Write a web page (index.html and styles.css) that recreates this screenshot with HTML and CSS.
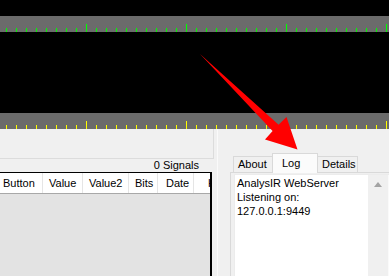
FILE: index.html
```html
<!DOCTYPE html>
<html>
<head>
<meta charset="utf-8">
<link rel="stylesheet" href="styles.css">
</head>
<body>
<div class="screen">
  <div class="black-top"></div>
  <div class="ruler ruler-green"></div>
  <div class="scope"></div>
  <div class="ruler ruler-yellow"></div>
  <div class="bottom">
    <div class="left">
      <div class="top-box"></div>
      <div class="count">0 Signals</div>
      <div class="list">
        <div class="list-head">
          <div class="col c1">Button</div>
          <div class="col c2">Value</div>
          <div class="col c3">Value2</div>
          <div class="col c4">Bits</div>
          <div class="col c5">Date</div>
          <div class="col c6">Hex</div>
        </div>
        <div class="list-body"></div>
      </div>
    </div>
    <div class="splitter"></div>
    <div class="right">
      <div class="tabs">
        <div class="tab">About</div>
        <div class="tab active">Log</div>
        <div class="tab">Details</div>
      </div>
      <div class="panel">
        <div class="textbox">
          <div class="log-text">AnalysIR WebServer<br>Listening on:<br>127.0.0.1:9449</div>
          <div class="vscroll"><span class="arrow-up"></span></div>
        </div>
      </div>
    </div>
  </div>
  <svg class="pointer" width="389" height="276" viewBox="0 0 389 276">
    <polygon points="200,54 278.6,124.8 286.5,117 297.5,149.5 265,139.5 272.6,131" fill="#ff0000"/>
  </svg>
</div>
</body>
</html>
```

FILE: styles.css
```css
html, body {
  margin: 0;
  padding: 0;
}
body {
  width: 389px;
  height: 276px;
  overflow: hidden;
  font-family: "Liberation Sans", Arial, sans-serif;
  font-size: 11px;
  color: #000;
}
.screen {
  position: relative;
  width: 389px;
  height: 276px;
  overflow: hidden;
  display: flex;
  flex-direction: column;
}
.black-top {
  height: 16px;
  background: #000;
}
.scope {
  height: 81px;
  background: #000;
}
.ruler {
  height: 16px;
  background-color: #6b6b6b;
  background-repeat: repeat-x;
  background-position: 0 100%, 0 100%;
}
.ruler-green {
  background-image:
    linear-gradient(to right, transparent 86px, #00ff00 86px, #00ff00 87px, transparent 87px),
    linear-gradient(to right, transparent 6px, #00ff00 6px, #00ff00 7px, transparent 7px);
  background-size: 100px 8px, 10px 4px;
}
.ruler-yellow {
  background-image:
    linear-gradient(to right, transparent 86px, #ffff00 86px, #ffff00 87px, transparent 87px),
    linear-gradient(to right, transparent 6px, #ffff00 6px, #ffff00 7px, transparent 7px);
  background-size: 100px 8px, 10px 4px;
}
.bottom {
  flex: 1;
  display: flex;
  background: #f0f0f0;
  min-height: 0;
}
.left {
  width: 214px;
  display: flex;
  flex-direction: column;
}
.top-box {
  height: 29px;
  border-bottom: 1px solid #dcdcdc;
  border-right: 1px solid #dcdcdc;
}
.count {
  width: 199px;
  height: 13px;
  line-height: 13px;
  text-align: right;
}
.list {
  width: 212px;
  flex: 1;
  box-sizing: border-box;
  border-top: 1px solid #000;
  border-right: 2px solid #000;
  display: flex;
  flex-direction: column;
  overflow: hidden;
}
.list-head {
  height: 20px;
  background: #fff;
  border-bottom: 1px solid #a8a8a8;
  display: flex;
  white-space: nowrap;
}
.col {
  box-sizing: border-box;
  height: 20px;
  line-height: 20px;
  border-right: 1px solid #e5e5e5;
  flex: none;
  overflow: hidden;
}
.c1 { width: 43px; padding-left: 3px; }
.c2 { width: 40px; padding-left: 6px; }
.c3 { width: 46px; padding-left: 6px; }
.c4 { width: 29px; padding-left: 6px; }
.c5 { width: 36px; padding-left: 8px; }
.c6 { width: 40px; padding-left: 14px; border-right: none; }
.list-body {
  flex: 1;
  background: #e3e3e3;
}
.splitter {
  width: 3px;
}
.right {
  flex: 1;
  border-left: 1px solid #fafafa;
  padding-left: 12px;
  padding-top: 24px;
  display: flex;
  flex-direction: column;
  min-width: 0;
}
.tabs {
  height: 19px;
  padding-left: 3px;
  display: flex;
  align-items: flex-end;
}
.tab {
  box-sizing: border-box;
  height: 16px;
  line-height: 15px;
  border: 1px solid #d9d9d9;
  border-bottom: none;
  background: #f0f0f0;
  padding: 0 4px 0 4px;
  flex: none;
}
.tab:first-child { width: 40px; }
.tab.active {
  width: 46px;
  height: 20px;
  line-height: 18px;
  margin-left: -1px;
  margin-bottom: -1px;
  padding-left: 9px;
  background: #fbfbfb;
  position: relative;
  z-index: 1;
}
.tab:last-child {
  width: 41px;
  margin-left: -1px;
}
.panel {
  flex: 1;
  width: 170px;
  box-sizing: border-box;
  border: 1px solid #d9d9d9;
  border-bottom: none;
  padding: 1px 0 0 3px;
  display: flex;
}
.textbox {
  flex: 1;
  border: 1px solid #ececec;
  border-bottom: none;
  background: #fff;
  display: flex;
  width: 155px;
}
.log-text {
  width: 131px;
  padding: 1px 0 0 2px;
  line-height: 14px;
  white-space: nowrap;
  overflow: hidden;
}
.vscroll {
  width: 20px;
  background: #f0f0f0;
  border-right: 1px solid #fafafa;
  display: flex;
  justify-content: center;
  padding-top: 7px;
  align-items: flex-start;
}
.arrow-up {
  width: 0;
  height: 0;
  border-left: 4px solid transparent;
  border-right: 4px solid transparent;
  border-bottom: 5px solid #a3a3a3;
}
.pointer {
  position: absolute;
  left: 0;
  top: 0;
  pointer-events: none;
}
```
